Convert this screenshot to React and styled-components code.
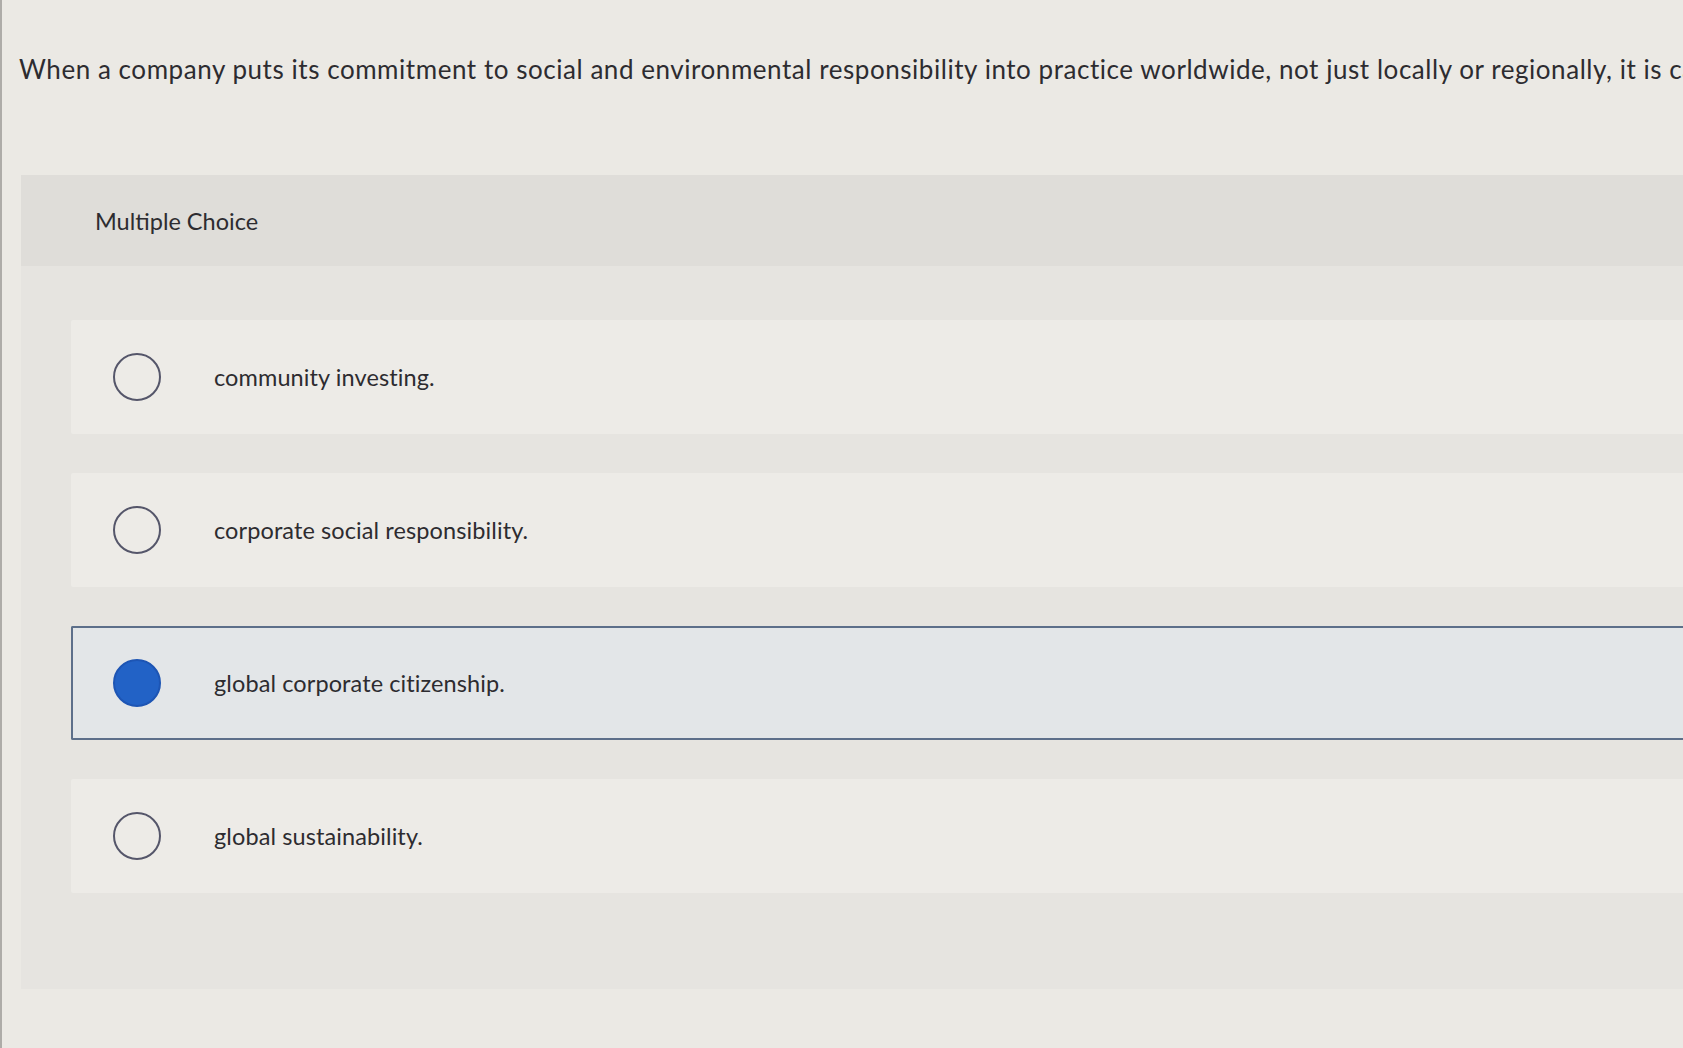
import React from 'react';
import styled, { createGlobalStyle } from 'styled-components';

const GlobalStyle = createGlobalStyle`
    html, body {
        margin: 0;
        padding: 0;
        background: #ebe9e4;
        overflow: hidden;
    }
    body {
        font-family: 'Lato', 'Open Sans', 'Liberation Sans', sans-serif;
        color: #2d2c30;
    }
`

const options = [
    { id: 'a', label: 'community investing.' },
    { id: 'b', label: 'corporate social responsibility.' },
    { id: 'c', label: 'global corporate citizenship.', selected: true },
    { id: 'd', label: 'global sustainability.' },
];

const App = () => {
    return (
        <Page>
            <GlobalStyle />
            <Question>
                When a company puts its commitment to social and environmental responsibility into practice worldwide, not just locally or regionally, it is called
            </Question>
            <Panel>
                <PanelHeader>Multiple Choice</PanelHeader>
                <OptionList>
                    {options.map((o) => (
                        <Option key={o.id} $selected={o.selected}>
                            <Radio $selected={o.selected} />
                            <Label>{o.label}</Label>
                        </Option>
                    ))}
                </OptionList>
            </Panel>
        </Page>
    );
};
export default App;

const Page = styled.div`
    width: 100vw;
    height: 100vh;
    box-sizing: border-box;
    padding-top: 53px;
    border-left: 2px solid #aeaca8;
    overflow: hidden;
`
const Question = styled.p`
    margin: 0;
    padding-left: 17px;
    font-size: 26px;
    line-height: 32px;
    white-space: nowrap;
    overflow: hidden;
    letter-spacing: 0.55px;
`
const Panel = styled.section`
    margin: 90px 0 0 19px;
    background: #e6e4e0;
    padding-bottom: 96px;
`
const PanelHeader = styled.div`
    height: 91px;
    display: flex;
    align-items: center;
    padding-left: 74px;
    background: #dfddd9;
    font-size: 23.5px;
`
const OptionList = styled.div`
    display: flex;
    flex-direction: column;
    gap: 39px;
    padding: 54px 0 0 50px;
`
const Option = styled.div`
    height: 114px;
    box-sizing: border-box;
    display: flex;
    align-items: center;
    padding-left: ${(p) => (p.$selected ? '40px' : '42px')};
    background: ${(p) => (p.$selected ? '#e3e6e8' : '#edebe7')};
    border: ${(p) => (p.$selected ? '2px solid #5d6f8a' : 'none')};
    border-right: none;
    border-radius: 2px 0 0 2px;
`
const Radio = styled.span`
    width: 48px;
    height: 48px;
    box-sizing: border-box;
    border-radius: 50%;
    flex-shrink: 0;
    border: ${(p) => (p.$selected ? '2px solid #1d55b4' : '2px solid #55566a')};
    background: ${(p) => (p.$selected ? '#2262c6' : 'transparent')};
    margin-right: 53px;
`
const Label = styled.span`
    font-size: 23.5px;
    letter-spacing: 0.1px;
`
